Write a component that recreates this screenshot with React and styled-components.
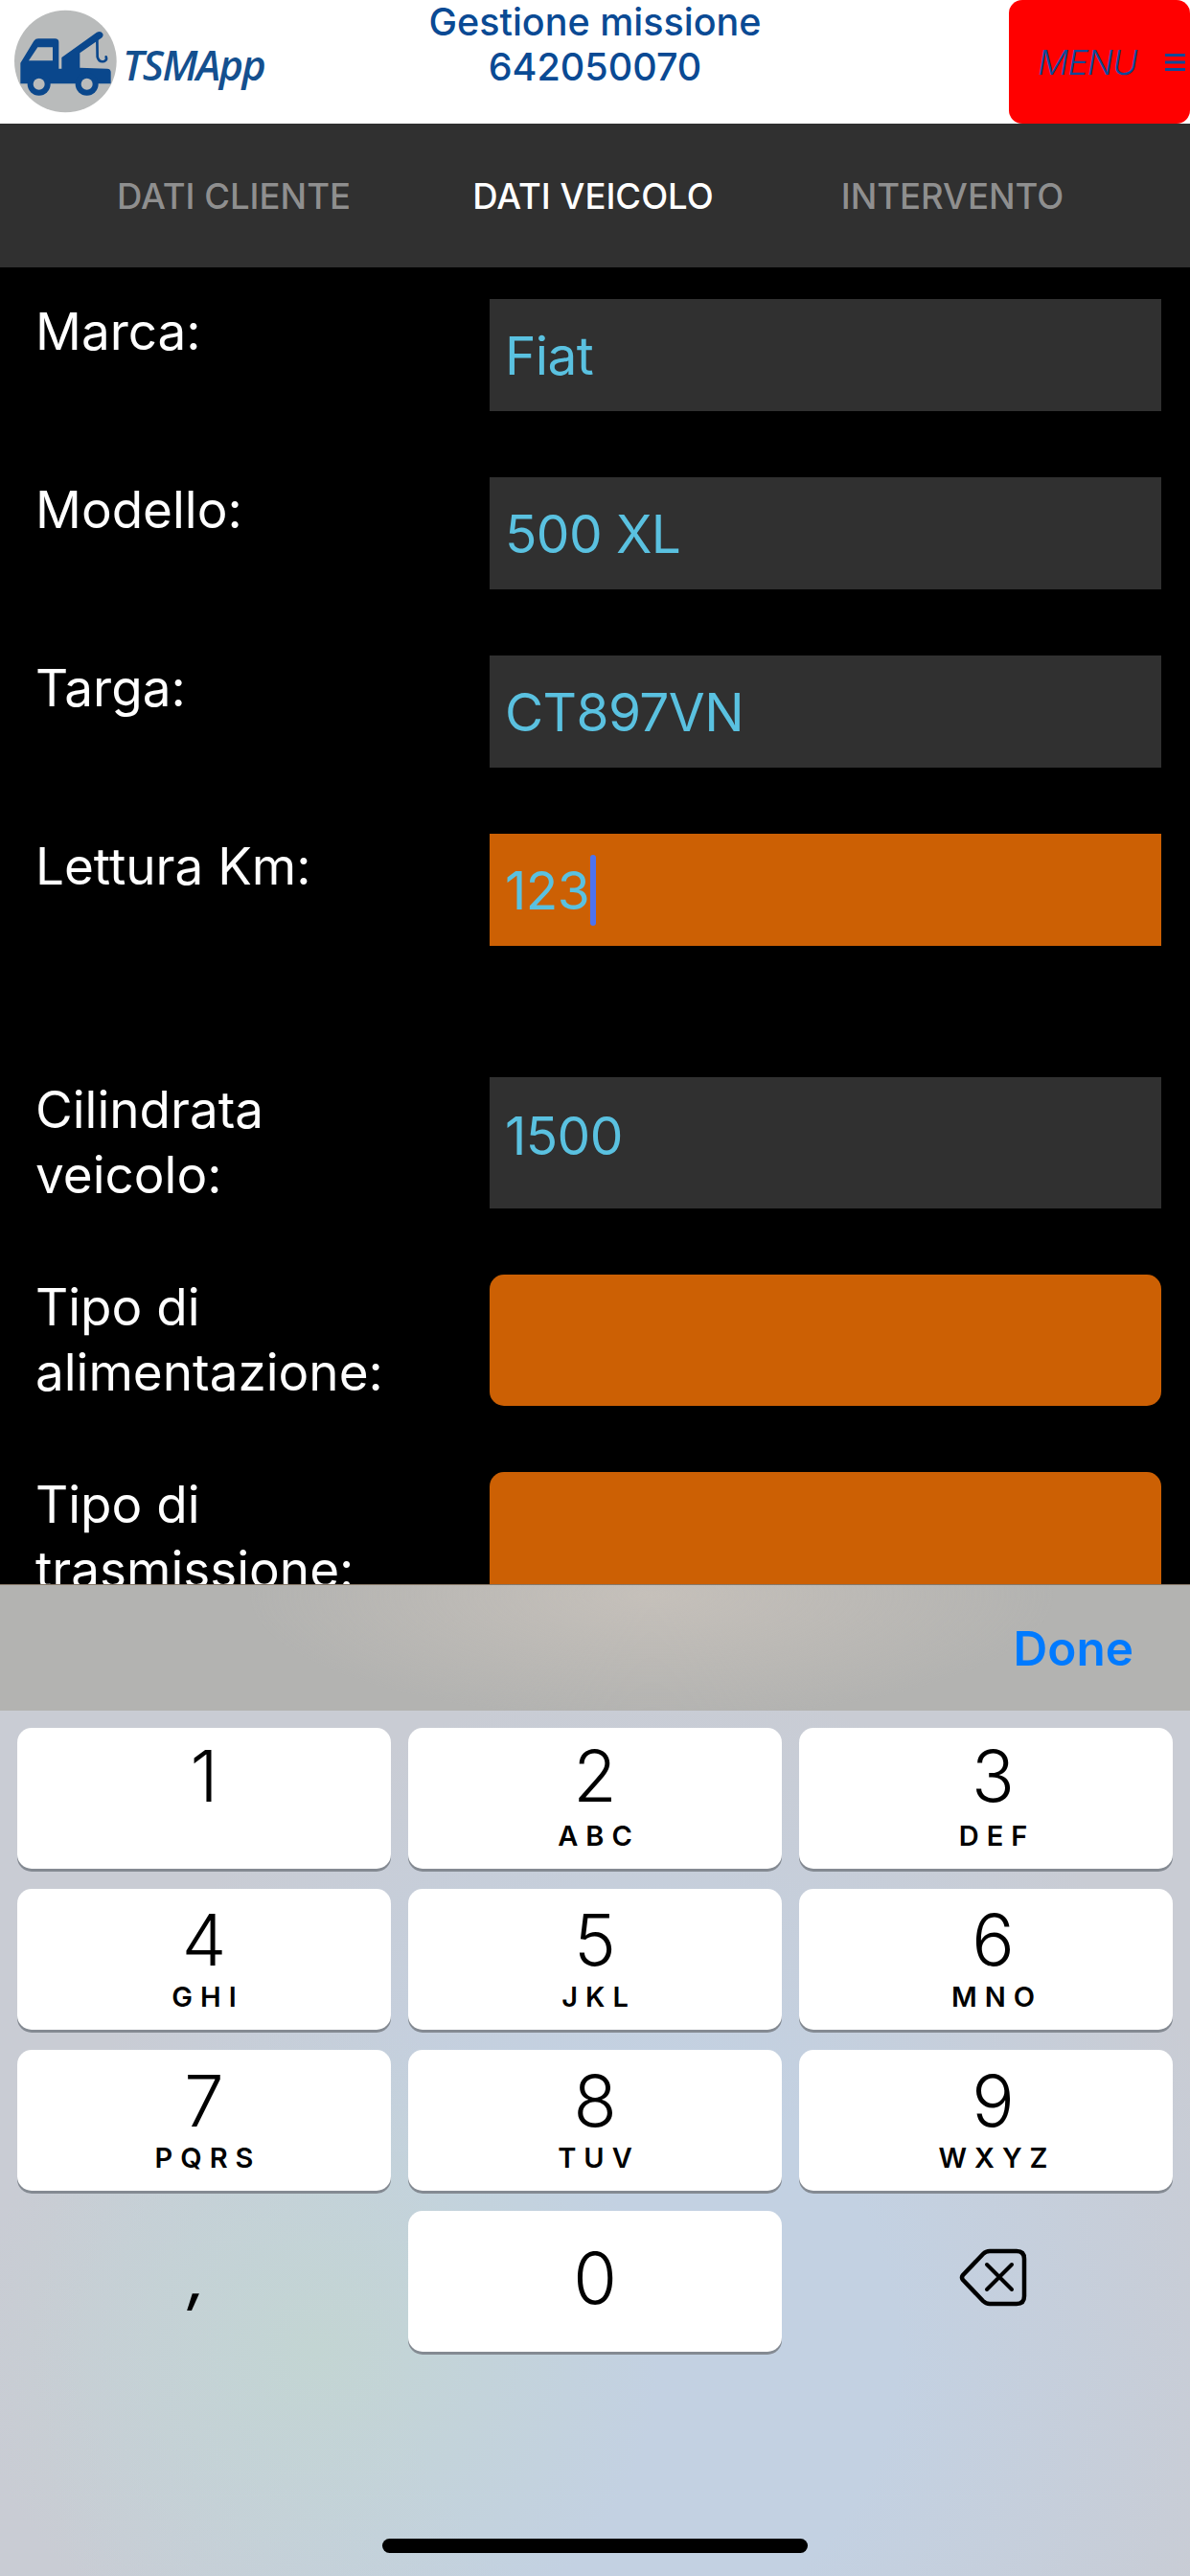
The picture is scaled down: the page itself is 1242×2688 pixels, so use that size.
import React from 'react';
import styled, { createGlobalStyle } from 'styled-components';

const GlobalStyle = createGlobalStyle`
  html, body {
    margin: 0;
    padding: 0;
    background: #000;
  }
  * {
    box-sizing: border-box;
  }
`;

const fields = [
  { label: 'Marca:', value: 'Fiat' },
  { label: 'Modello:', value: '500 XL' },
  { label: 'Targa:', value: 'CT897VN' },
  { label: 'Lettura Km:', value: '123', focus: true },
  { label: 'Cilindrata veicolo:', value: '1500', tall: true, spaced: true },
  { label: 'Tipo di alimentazione:', tall: true, select: true },
  { label: 'Tipo di trasmissione:', tall: true, select: true },
];

const keys = [
  ['1', ''],
  ['2', 'ABC'],
  ['3', 'DEF'],
  ['4', 'GHI'],
  ['5', 'JKL'],
  ['6', 'MNO'],
  ['7', 'PQRS'],
  ['8', 'TUV'],
  ['9', 'WXYZ'],
];

const Logo = () => (
  <LogoMark viewBox="0 0 384 387" aria-hidden="true">
    <circle cx="205" cy="192" r="160" fill="#b9bbbb" />
    <path
      fill="#0a478c"
      d="M64 197 L106 128 Q111 121 120 121 L172 121 Q184 121 184 132 L184 215 L193 215 L193 180 L303 101 Q316 95 322 106 Q325 114 316 120 L250 166 L250 212 L336 215 Q347 216 347 226 L347 262 L64 262 Z"
    />
    <path fill="#b9bbbb" d="M90 190 L118 148 L165 148 L165 190 Z" />
    <path
      fill="none"
      stroke="#0a478c"
      strokeWidth="8"
      strokeLinecap="round"
      d="M304 120 L305 178 Q310 196 326 192 Q336 188 332 178"
    />
    <circle cx="122" cy="263" r="36" fill="#0a478c" />
    <circle cx="122" cy="263" r="18" fill="#b9bbbb" />
    <circle cx="272" cy="263" r="36" fill="#0a478c" />
    <circle cx="272" cy="263" r="18" fill="#b9bbbb" />
  </LogoMark>
);

const MenuIcon = () => (
  <svg width="21" height="18" viewBox="0 0 21 18" aria-hidden="true">
    <path fill="#0d4a9a" d="M0 0 H21 V3 H0 Z M0 7.500 H21 V10.500 H0 Z M0 15 H21 V18 H0 Z" />
  </svg>
);

const BackspaceIcon = () => (
  <svg width="71" height="61" viewBox="0 0 71 61" fill="none" aria-hidden="true">
    <path
      stroke="#000"
      strokeWidth="4.500"
      strokeLinejoin="round"
      d="M32 3 L60 3 Q68 3 68 11 L68 50 Q68 58 60 58 L32 58 Q28 58 25 55 L4 33 Q2 30.500 4 28 L25 6 Q28 3 32 3 Z"
    />
    <path stroke="#000" strokeWidth="4" strokeLinecap="round" d="M29 17 L55 43 M55 17 L29 43" />
  </svg>
);

const App = () => {
  return (
    <Page>
      <GlobalStyle />
      <Header>
        <Brand>
          <Logo />
          <BrandName>TSMApp</BrandName>
        </Brand>
        <Title>
          Gestione missione
          <br />
          642050070
        </Title>
        <MenuButton>
          <MenuText>MENU</MenuText>
          <MenuIcon />
        </MenuButton>
      </Header>

      <Tabs>
        <Tab>DATI CLIENTE</Tab>
        <Tab $active>DATI VEICOLO</Tab>
        <Tab>INTERVENTO</Tab>
      </Tabs>

      <Form>
        {fields.map((f) => (
          <Row key={f.label} $spaced={f.spaced}>
            <Label>{f.label}</Label>
            <Field $tall={f.tall} $orange={f.focus || f.select} $rounded={f.select}>
              {f.value}
              {f.focus && <Caret />}
            </Field>
          </Row>
        ))}
      </Form>

      <Keyboard>
        <Toolbar>
          <DoneButton>Done</DoneButton>
        </Toolbar>
        <KeyGrid>
          {keys.map(([digit, letters], i) => (
            <Key key={digit} $topRow={i < 3}>
              <Digit>{digit}</Digit>
              {letters && <Letters $topRow={i < 3}>{letters}</Letters>}
            </Key>
          ))}
          <BareKey>
            <Comma>,</Comma>
          </BareKey>
          <Key $centered>
            <Digit>0</Digit>
          </Key>
          <BareKey>
            <BackspaceIcon />
          </BareKey>
        </KeyGrid>
        <HomeBar />
      </Keyboard>
    </Page>
  );
};

export default App;

const Page = styled.div`
  width: 1242px;
  height: 2688px;
  display: flex;
  flex-direction: column;
  overflow: hidden;
  background: #000;
  font-family: Inter, 'Liberation Sans', sans-serif;
`;

const Header = styled.header`
  height: 129px;
  flex: none;
  display: grid;
  grid-template-columns: 1fr auto 1fr;
  background: #fff;
`;

const Brand = styled.div`
  display: flex;
  align-items: center;
`;

const LogoMark = styled.svg`
  width: 128px;
  height: 129px;
  flex: none;
`;

const BrandName = styled.span`
  font-family: 'Open Sans', sans-serif;
  font-style: italic;
  font-weight: 600;
  font-size: 43px;
  letter-spacing: -1.5px;
  color: #14508f;
  margin-top: 6px;
`;

const Title = styled.div`
  font-size: 39.5px;
  font-weight: 500;
  line-height: 47px;
  text-align: center;
  color: #0a4a94;
`;

const MenuButton = styled.div`
  justify-self: end;
  width: 189px;
  height: 129px;
  display: flex;
  align-items: center;
  justify-content: space-between;
  padding: 0 5px 0 30px;
  border-radius: 14px;
  background: #ff0000;
  color: #0d4a9a;
`;

const MenuText = styled.span`
  font-size: 36px;
  font-weight: 300;
  font-style: italic;
  letter-spacing: -1px;
`;

const Tabs = styled.nav`
  height: 150px;
  flex: none;
  display: grid;
  grid-template-columns: repeat(3, 375px);
  justify-content: center;
  align-items: center;
  padding: 2px 4px 0 0;
  background: #303030;
`;

const Tab = styled.div`
  text-align: center;
  font-size: 36.5px;
  font-weight: 500;
  color: ${(p) => (p.$active ? '#fff' : '#8f8f8f')};
`;

const Form = styled.main`
  flex: 1;
  min-height: 0;
  overflow: hidden;
  padding: 33px 30px 0 37px;
  display: flex;
  flex-direction: column;
  gap: 69px;
`;

const Row = styled.div`
  flex: none;
  display: grid;
  grid-template-columns: 474px 1fr;
  margin-top: ${(p) => (p.$spaced ? '68px' : '0')};
`;

const Label = styled.div`
  max-width: 400px;
  font-size: 53px;
  line-height: 68px;
  color: #fff;
`;

const Field = styled.div`
  height: ${(p) => (p.$tall ? '137px' : '117px')};
  display: flex;
  align-items: center;
  padding: ${(p) => (p.$tall ? '0 16px 16px' : '0 16px')};
  font-size: 55px;
  letter-spacing: -0.6px;
  color: #5ac1e0;
  background: ${(p) => (p.$orange ? '#cc6004' : '#303030')};
  border-radius: ${(p) => (p.$rounded ? '15px' : '0')};
`;

const Caret = styled.span`
  width: 6px;
  height: 74px;
  margin-left: 1px;
  border-radius: 3px;
  background: #4d73f0;
`;

const Keyboard = styled.section`
  height: 1035px;
  flex: none;
  display: flex;
  flex-direction: column;
  background:
    radial-gradient(ellipse 360px 340px at 330px 800px, #c3d5d3 0%, rgba(195, 213, 211, 0) 100%),
    radial-gradient(ellipse 640px 700px at 680px 800px, #c3d1e2 40%, rgba(195, 209, 226, 0) 100%),
    #c9ccd4;
`;

const Toolbar = styled.div`
  height: 132px;
  flex: none;
  display: flex;
  align-items: center;
  justify-content: flex-end;
  padding-right: 59px;
  border-top: 1px solid rgba(90, 60, 30, 0.5);
  background:
    radial-gradient(ellipse 420px 130px at 680px 10px, #c5c0ba 0%, rgba(197, 192, 186, 0) 100%),
    #b3b3b1;
`;

const DoneButton = styled.span`
  font-size: 49.5px;
  font-weight: 600;
  color: #007aff;
`;

const KeyGrid = styled.div`
  display: grid;
  grid-template-columns: repeat(3, 390px);
  grid-auto-rows: 147px;
  gap: 21px 18px;
  padding: 18px 18px 0;

  & > :nth-child(3n) {
    padding-left: 15px;
  }
`;

const Key = styled.div`
  display: flex;
  flex-direction: column;
  align-items: center;
  justify-content: ${(p) => (p.$centered ? 'center' : 'flex-start')};
  padding: ${(p) => (p.$centered ? '0 0 8px' : p.$topRow ? '7px 0 0' : '10px 0 0')};
  border-radius: 15px;
  background: #fff;
  box-shadow: 0 3px 0 #848a92;
  color: #000;
`;

const BareKey = styled.div`
  display: flex;
  align-items: center;
  justify-content: center;
  padding-bottom: 8px;
`;

const Digit = styled.div`
  font-size: 74px;
  font-weight: 300;
  line-height: 86px;
`;

const Letters = styled.div`
  margin-top: ${(p) => (p.$topRow ? '3px' : '0')};
  margin-right: -8px;
  font-size: 29px;
  font-weight: 600;
  line-height: 34px;
  letter-spacing: 8px;
`;

const Comma = styled.span`
  margin: 2px 15px 0 0;
  font-size: 62px;
  font-weight: 500;
  font-style: italic;
  line-height: 1;
  color: #000;
`;

const HomeBar = styled.div`
  width: 444px;
  height: 15px;
  flex: none;
  align-self: center;
  margin-top: auto;
  margin-bottom: 24px;
  border-radius: 8px;
  background: #000;
`;
